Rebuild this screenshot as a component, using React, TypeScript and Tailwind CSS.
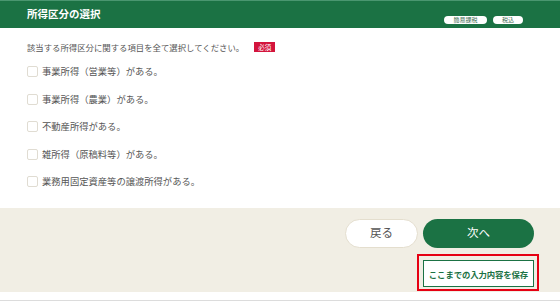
import React from 'react';

const items = [
  '事業所得（営業等）がある。',
  '事業所得（農業）がある。',
  '不動産所得がある。',
  '雑所得（原稿料等）がある。',
  '業務用固定資産等の譲渡所得がある。',
];

export default function App() {
  return (
    <div className="w-[560px] h-[303px] bg-white font-['Noto_Sans_CJK_JP','Noto_Sans',sans-serif] overflow-hidden">
      {/* Header */}
      <div className="h-[28px] bg-[#1b7244] border-t border-[#4a9670] flex justify-between pl-[27px] pr-[37px]">
        <h1 className="self-center text-[10.5px] leading-none font-bold text-white -mt-[1px]">所得区分の選択</h1>
        <div className="flex gap-[6px] self-end mb-[4px]">
          <span className="w-[43px] h-[8px] rounded-full bg-white text-[6px] leading-[8px] text-center text-[#3f6f55]">簡易課税</span>
          <span className="w-[30px] h-[8px] rounded-full bg-white text-[6px] leading-[8px] text-center text-[#3f6f55]">税込</span>
        </div>
      </div>

      {/* Body */}
      <div className="pl-[27px] pt-[13px] pb-[12px]">
        <div className="flex items-center h-[12px]">
          <p className="text-[8.4px] leading-none text-[#555]">該当する所得区分に関する項目を全て選択してください。</p>
          <span className="ml-[10px] h-[10px] px-[4px] bg-[#d3143c] text-white text-[6.5px] leading-[10px]">必須</span>
        </div>
        <div className="mt-[5px] flex flex-col">
          {items.map((label) => (
            <label key={label} className="h-[27.5px] flex items-center">
              <span className="w-[11px] h-[11px] rounded-[2px] border border-[#e0dcd2] bg-white" />
              <span className="ml-[4px] text-[9.3px] leading-none text-[#555]">{label}</span>
            </label>
          ))}
        </div>
      </div>

      {/* Footer actions */}
      <div className="h-[84px] bg-[#f1eee4] flex flex-col items-end pr-[21px] pt-[11px]">
        <div className="flex gap-[5px] mr-[5px]">
          <button className="w-[73px] h-[29px] rounded-full bg-white border border-[#e4dece] text-[11.5px] text-[#555]">戻る</button>
          <button className="w-[111px] h-[29px] rounded-full bg-[#1b7244] text-[11.5px] text-white">次へ</button>
        </div>
        <div className="mt-[6px] border-2 border-[#e60012] pt-[3px] pb-[2px] pl-[4px] pr-[3px]">
          <button className="w-[111px] h-[27px] bg-white border border-[#1b7244] text-[8.4px] font-bold text-[#1b7244] tracking-[-0.1px]">
            ここまでの入力内容を保存
          </button>
        </div>
      </div>

      <div className="h-[8px] bg-white" />
      <div className="h-px bg-[#dcdcdc]" />
    </div>
  );
}
